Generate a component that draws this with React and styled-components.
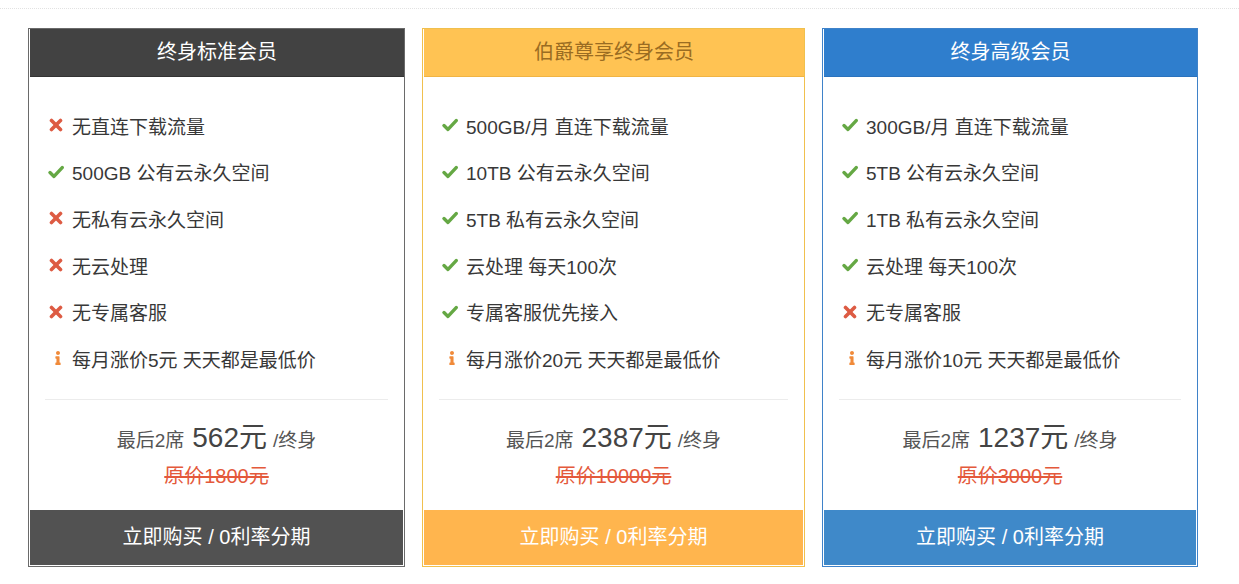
import React from "react";
import styled, { createGlobalStyle } from "styled-components";
import { FaInfo } from "react-icons/fa";

const Global = createGlobalStyle`
  html, body { margin: 0; padding: 0; background: #fff; }
  body { font-family: "Liberation Sans", "Noto Sans CJK SC", sans-serif; }
`;

const Page = styled.div`
  width: 1239px;
  height: 584px;
  background: #fff;
  overflow: hidden;
`;

const TopRule = styled.div`
  margin-top: 8px;
  border-top: 1px dotted #e2e2e2;
`;

const Row = styled.div`
  display: flex;
  gap: 17px;
  padding: 19px 0 0 28px;
  align-items: flex-start;
`;

const Card = styled.div`
  box-sizing: border-box;
  width: ${(p) => p.$w}px;
  border: 1px solid ${(p) => p.$border};
  padding: 0 1px 1px 1px;
  display: flex;
  flex-direction: column;
  background: #fff;
`;

const Header = styled.div`
  height: 48px;
  line-height: 46px;
  text-align: center;
  font-size: 20px;
  background: ${(p) => p.$bg};
  color: ${(p) => p.$color};
  border-bottom: 1px solid ${(p) => p.$shade};
  box-sizing: border-box;
  margin: 0 -1px 0 0;
`;

const List = styled.ul`
  list-style: none;
  margin: 0;
  padding: 25px 18px 0 18px;
`;

const Item = styled.li`
  display: flex;
  align-items: center;
  height: 46.6px;
  font-size: 19px;
  color: #383838;
  white-space: nowrap;
`;

const IconBox = styled.span`
  display: inline-flex;
  width: 24px;
  justify-content: flex-start;
  align-items: center;
  color: ${(p) => p.$color};
  padding-left: ${(p) => p.$pl || 0}px;
  box-sizing: border-box;
`;

const Divider = styled.div`
  margin: 17px 15px 0 15px;
  border-top: 1px solid #ececec;
`;

const PriceBlock = styled.div`
  padding: 23px 0 21px;
  text-align: center;
`;

const PriceLine = styled.div`
  height: 30px;
  line-height: 30px;
  font-size: 19px;
  color: #555;
  white-space: nowrap;
`;

const Big = styled.span`
  font-size: 28px;
  color: #444;
  margin: 0 6px 0 8px;
`;

const Strike = styled.div`
  margin-top: 10px;
  height: 26px;
  line-height: 26px;
  font-size: 20px;
  color: #e4593b;
  text-decoration: line-through;
`;

const Buy = styled.div`
  height: 55px;
  line-height: 55px;
  text-align: center;
  font-size: 20px;
  color: #fff;
  background: ${(p) => p.$bg};
`;

const XIcon = () => (
  <svg width="14" height="14" viewBox="0 0 14 14">
    <g stroke="currentColor" strokeWidth="3.6" strokeLinecap="round">
      <line x1="2.5" y1="2.5" x2="11.5" y2="11.5" />
      <line x1="11.5" y1="2.5" x2="2.5" y2="11.5" />
    </g>
  </svg>
);

const CheckIcon = () => (
  <svg width="16" height="14" viewBox="0 0 16 14">
    <path
      d="M2 7.6 L6 11.4 L14.2 2.6"
      fill="none"
      stroke="currentColor"
      strokeWidth="3.4"
      strokeLinecap="round"
      strokeLinejoin="round"
    />
  </svg>
);

const icons = {
  x: (
    <IconBox $color="#dd5b43" $pl={1}>
      <XIcon />
    </IconBox>
  ),
  ok: (
    <IconBox $color="#65a844">
      <CheckIcon />
    </IconBox>
  ),
  info: (
    <IconBox $color="#f08a3a" $pl={3}>
      <FaInfo size={14} />
    </IconBox>
  ),
};

const plans = [
  {
    w: 377,
    border: "#6a6a6a",
    head: "#424242",
    headShade: "#333",
    headColor: "#fff",
    btn: "#525252",
    title: "终身标准会员",
    items: [
      ["x", "无直连下载流量"],
      ["ok", "500GB 公有云永久空间"],
      ["x", "无私有云永久空间"],
      ["x", "无云处理"],
      ["x", "无专属客服"],
      ["info", "每月涨价5元 天天都是最低价"],
    ],
    price: "562元",
    orig: "原价1800元",
  },
  {
    w: 383,
    border: "#f0c04e",
    head: "#ffc353",
    headShade: "#f0b444",
    headColor: "#9a6c22",
    btn: "#ffb54e",
    title: "伯爵尊享终身会员",
    items: [
      ["ok", "500GB/月 直连下载流量"],
      ["ok", "10TB 公有云永久空间"],
      ["ok", "5TB 私有云永久空间"],
      ["ok", "云处理 每天100次"],
      ["ok", "专属客服优先接入"],
      ["info", "每月涨价20元 天天都是最低价"],
    ],
    price: "2387元",
    orig: "原价10000元",
  },
  {
    w: 376,
    border: "#3f82c9",
    head: "#2f7ecd",
    headShade: "#2a72bd",
    headColor: "#fff",
    btn: "#3f89c9",
    title: "终身高级会员",
    items: [
      ["ok", "300GB/月 直连下载流量"],
      ["ok", "5TB 公有云永久空间"],
      ["ok", "1TB 私有云永久空间"],
      ["ok", "云处理 每天100次"],
      ["x", "无专属客服"],
      ["info", "每月涨价10元 天天都是最低价"],
    ],
    price: "1237元",
    orig: "原价3000元",
  },
];

export default function App() {
  return (
    <Page>
      <Global />
      <TopRule />
      <Row>
        {plans.map((p) => (
          <Card key={p.title} $w={p.w} $border={p.border}>
            <Header $bg={p.head} $color={p.headColor} $shade={p.headShade}>
              {p.title}
            </Header>
            <List>
              {p.items.map(([k, t]) => (
                <Item key={t}>
                  {icons[k]}
                  <span>{t}</span>
                </Item>
              ))}
            </List>
            <Divider />
            <PriceBlock>
              <PriceLine>
                最后2席<Big>{p.price}</Big>/终身
              </PriceLine>
              <Strike>{p.orig}</Strike>
            </PriceBlock>
            <Buy $bg={p.btn}>立即购买 / 0利率分期</Buy>
          </Card>
        ))}
      </Row>
    </Page>
  );
}
